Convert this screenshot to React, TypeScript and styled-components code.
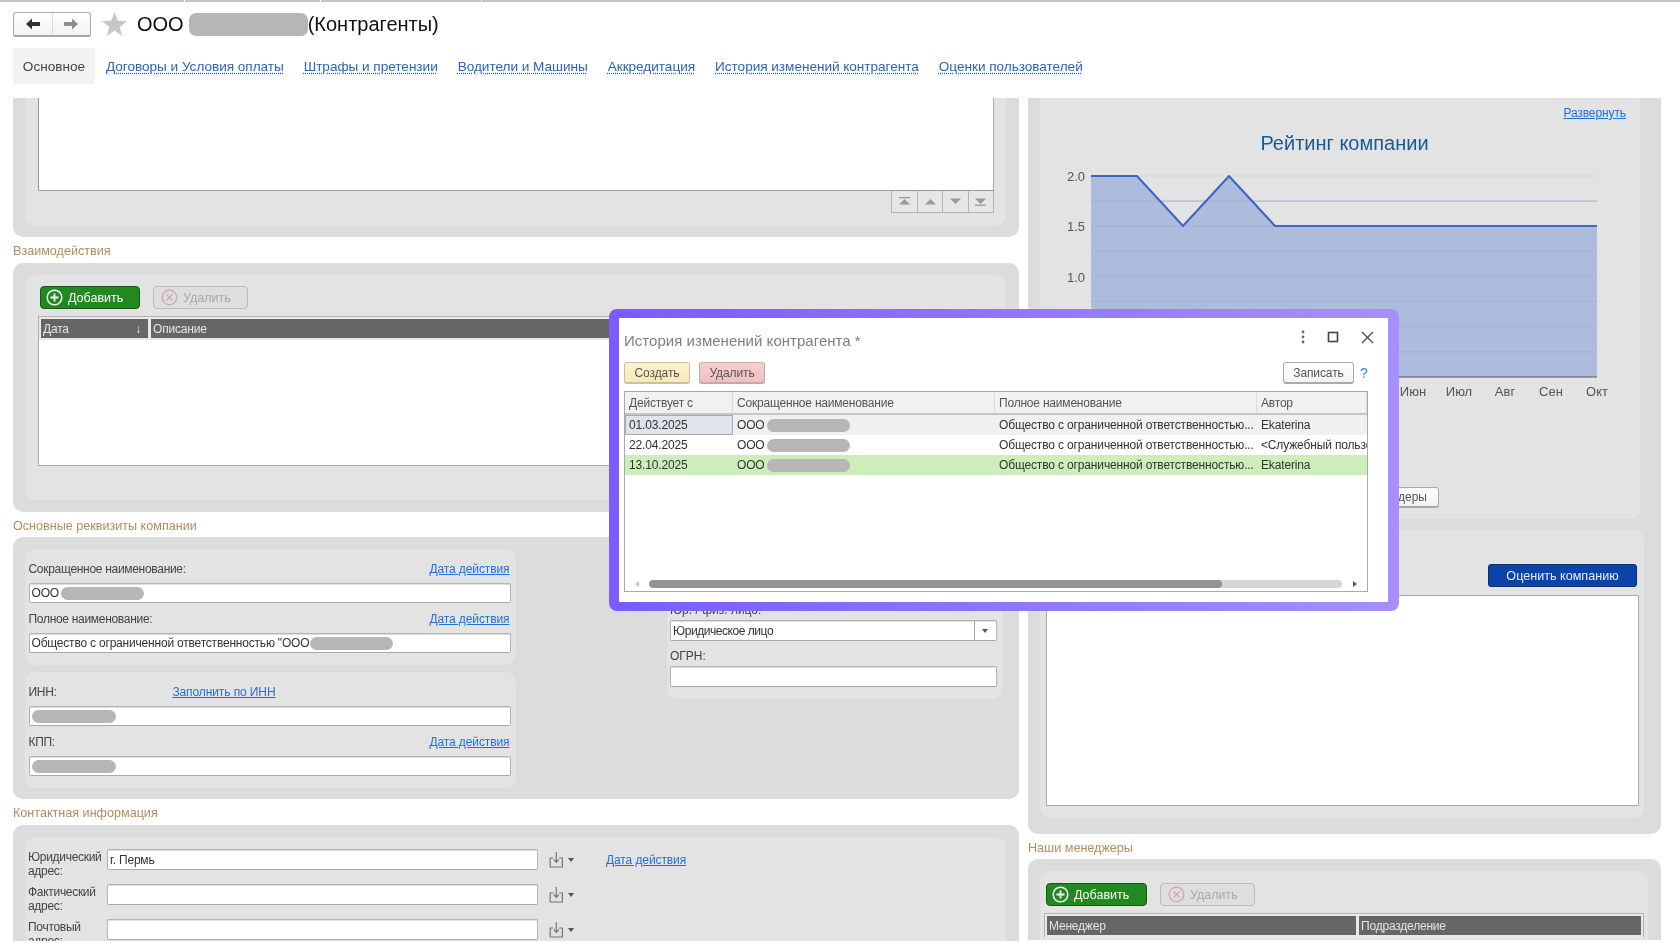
import React from "react";
import styled, { createGlobalStyle } from "styled-components";

const Global = createGlobalStyle`
  html, body { margin: 0; padding: 0; background: #fff; }
  body { font-family: "Liberation Sans", Arial, sans-serif; color: #333; font-size: 12px; }
  * { box-sizing: border-box; }
`;

const Page = styled.div`
  width: 1680px; height: 943px; overflow: hidden; position: relative; background: #fff;
  filter: blur(0.45px);
`;
const TopStrip = styled.div`display: flex; height: 2px; background: #c4c4c4;`;
const StripGap = styled.div<{ $w: number }>`width: ${p => p.$w}px; border-right: 1px solid #fff;`;

const Header = styled.div`display: flex; align-items: center; height: 34px; margin-top: 5px; padding-left: 13px;`;
const NavGroup = styled.div`
  display: flex; width: 78px; height: 25px; border: 1px solid #a8a8a8; border-bottom-width: 2px; border-radius: 3px; background: linear-gradient(#fff, #f2f2f2);
`;
const NavButton = styled.div<{ $dim?: boolean }>`
  flex: 1; display: flex; align-items: center; justify-content: center;
  color: ${p => (p.$dim ? "#8a8a8a" : "#333")};
  & + & { border-left: 1px solid #dcdcdc; }
`;
const StarBox = styled.div`width: 25px; height: 24px; margin-left: 11px; display: flex;`;
const Title = styled.h1`
  margin: 0 0 0 10px; display: flex; align-items: center; font-weight: 400; font-size: 20px; color: #111;
`;
const Pill = styled.span<{ $w: number; $h?: number; $ml?: number }>`
  display: inline-block; flex: none; width: ${p => p.$w}px; height: ${p => p.$h ?? 13}px; margin-left: ${p => p.$ml ?? 0}px;
  background: #b6b6b6; border-radius: 7px; vertical-align: middle;
`;
const Tabs = styled.nav`display: flex; align-items: center; height: 36px; margin-top: 7px; padding-left: 13px; gap: 20px;`;
const ActiveTab = styled.div`
  width: 82px; height: 36px; margin-right: -9px; display: flex; align-items: center; justify-content: center;
  background: #f2f2f2; border-radius: 3px; font-size: 13.6px; color: #444;
`;
const TabLink = styled.a`
  font-size: 13.6px; letter-spacing: -0.03px; color: #2f62b5; text-decoration: underline; text-decoration-style: dotted; text-underline-offset: 2px; white-space: nowrap;
`;

const Main = styled.main`display: flex; gap: 9px; height: 843px; margin-top: 14px; padding-left: 13px; overflow: hidden;`;
const LeftCol = styled.div`width: 1006px; flex: none;`;
const RightCol = styled.div`width: 633px; flex: none;`;

const Outer = styled.section<{ $flatTop?: boolean }>`
  background: #dcdcdc; border-radius: ${p => (p.$flatTop ? "0 0 10px 10px" : "10px")};
`;
const Inner = styled.div`background: #e3e3e3; border-radius: 10px;`;
const SectionLabel = styled.div<{ $h: number; $pt?: number }>`
  height: ${p => p.$h}px; padding-top: ${p => p.$pt ?? 0}px; display: flex; align-items: center; color: #b08d5f; font-size: 12.6px;
`;

const TopPanel = styled(Outer)`padding: 0 13px 11px 12px;`;
const TopInner = styled(Inner)`height: 128px; padding: 0 12px 0 13px; border-radius: 0 0 10px 10px;`;
const TextBox = styled.div`height: 93px; background: #fff; border-left: 1px solid #999; border-bottom: 1px solid #999; border-right: 1px solid #aaa;`;
const Pager = styled.div`display: flex; justify-content: flex-end;`;
const PagerBtn = styled.div`
  width: 26.4px; height: 22px; border: 1px solid #b4b4b4; border-top: 0; margin-left: -1px; display: flex; align-items: center; justify-content: center; background: #e6e6e6;
`;

const WorkPanel = styled(Outer)`padding: 12px 13px 12px 12px;`;
const WorkInner = styled(Inner)`height: 225px; padding: 11px 0 0 13px; overflow: hidden;`;
const ToolRow = styled.div`display: flex; align-items: center; gap: 13px; height: 23px; margin-left: 2px; font-size: 12.5px;`;
const AddBtn = styled.div<{ $w: number }>`
  width: ${p => p.$w}px; height: 23px; display: flex; align-items: center; gap: 5px; padding-left: 5px;
  background: #21891f; border: 1px solid #115c12; border-radius: 4px; color: #fff;
`;
const DelBtn = styled.div<{ $w: number }>`
  width: ${p => p.$w}px; height: 23px; display: flex; align-items: center; gap: 5px; padding-left: 7px;
  background: #dedede; border: 1px solid #c9b6b6; border-radius: 4px; color: #a9a9a9;
`;
const GridHead = styled.div`
  display: flex; gap: 3px; height: 24px; margin-top: 7px; padding: 2px 2px; border: 1px solid #b0b0b0; border-bottom: 0; background: #e9e9e9;
`;
const GridCell = styled.div<{ $w?: number }>`
  ${p => (p.$w ? `width: ${p.$w}px; flex: none;` : "flex: 1;")}
  background: #666; color: #e4e4e4; font-size: 12px; letter-spacing: -0.2px; display: flex; align-items: center; justify-content: space-between; padding: 0 7px 0 2px;
`;
const GridBody = styled.div`height: 126px; background: #fff; border: 1px solid #aaa; border-top: 0;`;

const ReqPanel = styled(Outer)`height: 262px; padding: 12px 4px 0 11.5px; display: flex;`;
const ReqLeft = styled.div`width: 491px; flex: none; display: flex; flex-direction: column; gap: 7px;`;
const FieldGroup = styled(Inner)`height: 116px; padding: 9px 5px 0 4px; display: flex; flex-direction: column; gap: 5px;`;
const FieldHead = styled.div`
  height: 20px; flex: none; display: flex; align-items: center; justify-content: space-between; font-size: 12px; letter-spacing: -0.3px; color: #444; padding-right: 1px; padding-top: 1px;
`;
const LinkText = styled.a`font-size: 12px; letter-spacing: -0.1px; color: #1f70dc; text-decoration: underline; white-space: nowrap;`;
const FillLink = styled(LinkText)`margin-right: 234px;`;
const RowLink = styled(LinkText)`margin-top: 4px;`;
const Input = styled.div<{ $h?: number }>`
  height: ${p => p.$h ?? 20}px; flex: none; display: flex; align-items: center; background: #fff; border: 1px solid #b4b4b4; border-bottom-color: #aaa; border-radius: 2px;
  padding-left: 2px; font-size: 12px; letter-spacing: -0.2px; color: #333; white-space: nowrap; box-shadow: inset 0 1px 0 #ddd;
`;
const ReqRight = styled(Inner)`
  width: 335px; height: 150px; margin-left: 151px; padding: 51px 5px 0 3.5px; flex: none; display: flex; flex-direction: column;
`;
const SmallLabel = styled.div<{ $mt?: number }>`height: 20px; margin-top: ${p => p.$mt ?? 0}px; display: flex; align-items: center; font-size: 12px; color: #444; flex: none;`;
const Combo = styled(Input)`height: 21px; justify-content: space-between; padding-right: 0; letter-spacing: -0.45px;`;
const ComboArrow = styled.div`
  width: 22px; height: 100%; border-left: 1px solid #aaa; display: flex; align-items: center; justify-content: center;
`;
const Tri = styled.span`width: 0; height: 0; border-left: 3px solid transparent; border-right: 3px solid transparent; border-top: 4px solid #555; display: inline-block;`;

const ContactPanel = styled(Outer)`padding: 12px 13px 0 12px; border-radius: 10px 10px 0 0;`;
const ContactInner = styled(Inner)`height: 120px; padding: 12px 0 0 3px; border-radius: 10px 10px 0 0; display: flex; flex-direction: column; gap: 14px;`;
const ContactRow = styled.div`display: flex; align-items: flex-start; height: 21px;`;
const ContactLabel = styled.div`width: 79px; flex: none; padding-top: 1px; line-height: 14px; font-size: 12px; letter-spacing: -0.3px; color: #444;`;
const ContactInput = styled(Input)`width: 431px; height: 21px;`;
const IconSlot = styled.div`width: 68px; flex: none; display: flex; align-items: center; gap: 4px; height: 21px; padding-left: 11px;`;

const ChartPanel = styled(Outer)`height: 736px; padding: 0 17px 16px 12px;`;
const ChartInner = styled(Inner)`height: 421px; width: 600px; padding-top: 6px; border-radius: 0 0 10px 10px;`;
const ExpandRow = styled.div`display: flex; justify-content: flex-end; height: 18px; align-items: center; padding-right: 14px;`;
const ChartTitle = styled.h2`
  margin: 8px 0 0; height: 26px; line-height: 26px; text-align: center; font-size: 20px; font-weight: 400; color: #175a9a; padding-left: 9px;
`;
const ChartSvg = styled.svg`display: block; width: 600px; height: 240px; margin-top: 4px; overflow: visible;`;
const LeadersBtn = styled.div`
  width: 100px; height: 21px; margin: 87px 0 0 299px; display: flex; align-items: center; justify-content: flex-end; padding-right: 11px;
  border: 1px solid #aaa; border-bottom-width: 2px; border-radius: 3px; background: linear-gradient(#fff, #f1f1f1); font-size: 12px; color: #555;
`;
const RatePanel = styled(Inner)`height: 288px; margin-top: 11px; padding: 34px 5px 0 6px; display: flex; flex-direction: column;`;
const RateBtn = styled.div`
  width: 149px; height: 23px; margin-left: 442px; display: flex; align-items: center; justify-content: center;
  background: #0b44a8; border: 1px solid #0a2f76; border-radius: 3px; color: #e6eeff; font-size: 12.6px;
`;
const RateBox = styled.div`height: 211px; margin-top: 8px; background: #fff; border: 1px solid #aaa;`;

const MgrPanel = styled(Outer)`padding: 12px 13px 0 12px; border-radius: 10px 10px 0 0;`;
const MgrInner = styled(Inner)`height: 69px; padding: 12px 4px 0 6px; border-radius: 10px 10px 0 0;`;
const MgrTools = styled(ToolRow)`margin-left: 0;`;
const MgrHead = styled(GridHead)`margin-top: 7px; margin-left: -2px; padding: 2px;`;

const Modal = styled.div`
  position: absolute; left: 609px; top: 309px; width: 790px; height: 302px; padding: 9px 11px 9px 10px; border-radius: 8px;
  background: linear-gradient(90deg, #7a5cff, #a78fff);
`;
const ModalBody = styled.div`width: 100%; height: 100%; background: #fff; padding: 0 20px 0 5px; display: flex; flex-direction: column;`;
const ModalHead = styled.div`height: 44px; flex: none; display: flex; align-items: center; justify-content: space-between;`;
const ModalTitle = styled.div`font-size: 15px; color: #7f7f7f; margin-top: 0; letter-spacing: 0.03px;`;
const ModalIcons = styled.div`display: flex; align-items: center; gap: 22px; margin-right: -6px; margin-top: -6px;`;
const ModalTools = styled.div`display: flex; align-items: center; height: 22px; gap: 9px;`;
const ToolBtn = styled.div<{ $bg: string; $w: number; $b: string }>`
  width: ${p => p.$w}px; height: 22px; display: flex; align-items: center; justify-content: center;
  background: ${p => p.$bg}; border: 1px solid ${p => p.$b}; border-bottom-width: 2px; border-radius: 3px; font-size: 12px; letter-spacing: -0.1px; color: #555;
`;
const Spacer = styled.div`flex: 1;`;
const Help = styled.span`font-size: 14px; color: #2b8ad0; margin-left: -3px; width: 8px;`;
const HistTable = styled.div`
  height: 201px; margin-top: 7px; flex: none; border: 1px solid #a9a9a9; position: relative; overflow: hidden; background: #fff;
`;
const Row = styled.div<{ $bg?: string; $h?: number }>`
  display: grid; grid-template-columns: 108px 262px 262px 110px; height: ${p => p.$h ?? 20}px; background: ${p => p.$bg ?? "#fff"}; align-items: stretch;
`;
const HeadRow = styled(Row)`border-bottom: 2px solid #c6c6c6;`;
const Th = styled.div`
  display: flex; align-items: center; padding-left: 4px; font-size: 12px; letter-spacing: -0.2px; color: #555; background: #f1f1f1; border-right: 1px solid #dcdcdc; white-space: nowrap; overflow: hidden;
`;
const Td = styled.div<{ $sel?: boolean }>`
  display: flex; align-items: center; padding-left: 4px; font-size: 12px; letter-spacing: -0.15px; color: #333; white-space: nowrap; overflow: hidden;
  ${p => (p.$sel ? "background: #dfe3ea; border: 1px solid #a2abb8; padding-left: 3px;" : "")}
`;
const ScrollArea = styled.div`position: absolute; left: 0; right: 0; bottom: 2px; height: 10px; display: flex; align-items: center;`;
const ScrollTrack = styled.div`position: relative; width: 693px; height: 8px; margin-left: 24px; background: #d6d6d6; border-radius: 4px; overflow: hidden;`;
const ScrollThumb = styled.div`width: 573px; height: 100%; background: #939393; border-radius: 4px;`;
const ScrollTriL = styled.span`position: absolute; left: 10px; width: 0; height: 0; border-top: 3px solid transparent; border-bottom: 3px solid transparent; border-right: 4px solid #c4c4c4;`;
const ScrollTriR = styled.span`position: absolute; right: 10px; width: 0; height: 0; border-top: 3px solid transparent; border-bottom: 3px solid transparent; border-left: 4px solid #555;`;

const PlusIcon = () => (
  <svg width="17" height="17" viewBox="0 0 17 17" fill="none" stroke="#fff" strokeWidth="1.5">
    <circle cx="8.5" cy="8.5" r="7.3" />
    <path d="M8.5 4.5v8M4.5 8.5h8" strokeWidth="1.8" />
  </svg>
);
const CrossIcon = () => (
  <svg width="17" height="17" viewBox="0 0 17 17" fill="none" stroke="#d2a9a9" strokeWidth="1.3">
    <circle cx="8.5" cy="8.5" r="7.3" />
    <path d="M5.5 5.5l6 6M11.5 5.5l-6 6" />
  </svg>
);
const AddressIcon = () => (
  <svg width="15" height="17" viewBox="0 0 15 17" fill="none" stroke="#777" strokeWidth="1.2">
    <path d="M4.5 7H1.2v9h12.2V7h-3.3" />
    <path d="M7.3 1v10M4.8 8.5l2.5 2.8 2.5-2.8" />
  </svg>
);
const PagerIcon = ({ up, bar }: { up: boolean; bar: boolean }) => (
  <svg width="13" height="9" viewBox="0 0 13 9" fill="#9a9a9a">
    {up ? <path d="M6.5 2L12 7.5H1z" /> : <path d="M1 1.5h11L6.5 7z" />}
    {bar && (up ? <rect x="1" y="0" width="11" height="1.3" /> : <rect x="1" y="7.6" width="11" height="1.3" />)}
  </svg>
);

const values = [16, 16, 66, 16, 66, 66, 66, 66, 66, 66, 66, 66];
const xs = values.map((_, i) => 51 + i * 46);
const line = xs.map((x, i) => `${x},${values[i]}`).join(" ");
const visibleMonths = [["Июн", 7], ["Июл", 8], ["Авг", 9], ["Сен", 10], ["Окт", 11]] as const;
const yLabels = [["2.0", 16], ["1.5", 66], ["1.0", 117]] as const;

const Chart = () => (
  <ChartSvg viewBox="0 0 600 240">
    {[0, 1, 2, 3, 4, 5, 6, 7].map(i => (
      <line key={i} x1="51" x2="557" y1={16 + i * 25.1} y2={16 + i * 25.1} stroke="#d8d8d8" strokeWidth="1.2" />
    ))}
    <polygon points={`51,217 ${line} 557,217`} fill="#adbcdc" />
    {[1, 2, 3, 4, 5, 6, 7].map(i => (
      <line key={i} x1="51" x2="557" y1={16 + i * 25.1} y2={16 + i * 25.1} stroke="#a3b3d5" strokeWidth="1" />
    ))}
    <polyline points={line} fill="none" stroke="#3b65c6" strokeWidth="2.2" />
    <line x1="51" x2="557" y1="217" y2="217" stroke="#555" strokeWidth="1.2" />
    {yLabels.map(([t, y]) => (
      <text key={t} x="45" y={y + 4.5} textAnchor="end" fontSize="13" fill="#555" fontFamily="Liberation Sans">{t}</text>
    ))}
    {visibleMonths.map(([m, i]) => (
      <text key={m} x={xs[i]} y="236" textAnchor="middle" fontSize="13" fill="#555" fontFamily="Liberation Sans">{m}</text>
    ))}
  </ChartSvg>
);

const rows = [
  { d: "01.03.2025", a: "Ekaterina", bg: "#eff0f2", sel: true },
  { d: "22.04.2025", a: "<Служебный пользователь>", bg: "#fff", sel: false },
  { d: "13.10.2025", a: "Ekaterina", bg: "#cdeebb", sel: false },
];

export default function App() {
  return (
    <Page>
      <Global />
      <TopStrip>
        <StripGap $w={185} /><StripGap $w={136} /><StripGap $w={161} />
      </TopStrip>
      <Header>
        <NavGroup>
          <NavButton>
            <svg width="16" height="12" viewBox="0 0 16 12"><path d="M7 0.5L1 6l6 5.5V8h8V4H7z" fill="#333" /></svg>
          </NavButton>
          <NavButton $dim>
            <svg width="16" height="12" viewBox="0 0 16 12"><path d="M9 0.5L15 6l-6 5.5V8H1V4h8z" fill="#8e8e8e" /></svg>
          </NavButton>
        </NavGroup>
        <StarBox>
          <svg width="25" height="24" viewBox="0 0 25 24"><path d="M12.5 0l3.2 8.8 9.3.3-7.3 5.8 2.6 9-7.8-5.3-7.8 5.3 2.6-9L0 9.1l9.3-.3z" fill="#c6c6c6" /></svg>
        </StarBox>
        <Title>ООО<Pill $w={119} $h={23} $ml={5} />(Контрагенты)</Title>
      </Header>
      <Tabs>
        <ActiveTab>Основное</ActiveTab>
        <TabLink>Договоры и Условия оплаты</TabLink>
        <TabLink>Штрафы и претензии</TabLink>
        <TabLink>Водители и Машины</TabLink>
        <TabLink>Аккредитация</TabLink>
        <TabLink>История изменений контрагента</TabLink>
        <TabLink>Оценки пользователей</TabLink>
      </Tabs>
      <Main>
        <LeftCol>
          <TopPanel $flatTop>
            <TopInner>
              <TextBox />
              <Pager>
                <PagerBtn><PagerIcon up bar /></PagerBtn>
                <PagerBtn><PagerIcon up bar={false} /></PagerBtn>
                <PagerBtn><PagerIcon up={false} bar={false} /></PagerBtn>
                <PagerBtn><PagerIcon up={false} bar /></PagerBtn>
              </Pager>
            </TopInner>
          </TopPanel>
          <SectionLabel $h={26} $pt={2}>Взаимодействия</SectionLabel>
          <WorkPanel>
            <WorkInner>
              <ToolRow>
                <AddBtn $w={100}><PlusIcon />Добавить</AddBtn>
                <DelBtn $w={95}><CrossIcon />Удалить</DelBtn>
              </ToolRow>
              <GridHead>
                <GridCell $w={107}>Дата<span>↓</span></GridCell>
                <GridCell>Описание</GridCell>
              </GridHead>
              <GridBody />
            </WorkInner>
          </WorkPanel>
          <SectionLabel $h={25} $pt={2}>Основные реквизиты компании</SectionLabel>
          <ReqPanel>
            <ReqLeft>
              <FieldGroup>
                <FieldHead>Сокращенное наименование:<LinkText>Дата действия</LinkText></FieldHead>
                <Input>ООО<Pill $w={83} $ml={2} /></Input>
                <FieldHead>Полное наименование:<LinkText>Дата действия</LinkText></FieldHead>
                <Input>Общество с ограниченной ответственностью "ООО<Pill $w={83} $ml={1} /></Input>
              </FieldGroup>
              <FieldGroup>
                <FieldHead>ИНН:<FillLink>Заполнить по ИНН</FillLink></FieldHead>
                <Input><Pill $w={84} /></Input>
                <FieldHead>КПП:<LinkText>Дата действия</LinkText></FieldHead>
                <Input><Pill $w={84} /></Input>
              </FieldGroup>
            </ReqLeft>
            <ReqRight>
              <SmallLabel>Юр. / физ. лицо:</SmallLabel>
              <Combo>Юридическое лицо<ComboArrow><Tri /></ComboArrow></Combo>
              <SmallLabel $mt={5}>ОГРН:</SmallLabel>
              <Input $h={21} />
            </ReqRight>
          </ReqPanel>
          <SectionLabel $h={26} $pt={2}>Контактная информация</SectionLabel>
          <ContactPanel>
            <ContactInner>
              <ContactRow>
                <ContactLabel>Юридический адрес:</ContactLabel>
                <ContactInput>г. Пермь</ContactInput>
                <IconSlot><AddressIcon /><Tri /></IconSlot>
                <RowLink>Дата действия</RowLink>
              </ContactRow>
              <ContactRow>
                <ContactLabel>Фактический адрес:</ContactLabel>
                <ContactInput />
                <IconSlot><AddressIcon /><Tri /></IconSlot>
              </ContactRow>
              <ContactRow>
                <ContactLabel>Почтовый адрес:</ContactLabel>
                <ContactInput />
                <IconSlot><AddressIcon /><Tri /></IconSlot>
              </ContactRow>
            </ContactInner>
          </ContactPanel>
        </LeftCol>
        <RightCol>
          <ChartPanel $flatTop>
            <ChartInner>
              <ExpandRow><LinkText>Развернуть</LinkText></ExpandRow>
              <ChartTitle>Рейтинг компании</ChartTitle>
              <Chart />
              <LeadersBtn>Лидеры</LeadersBtn>
            </ChartInner>
            <RatePanel>
              <RateBtn>Оценить компанию</RateBtn>
              <RateBox />
            </RatePanel>
          </ChartPanel>
          <SectionLabel $h={25} $pt={2}>Наши менеджеры</SectionLabel>
          <MgrPanel>
            <MgrInner>
              <MgrTools>
                <AddBtn $w={101}><PlusIcon />Добавить</AddBtn>
                <DelBtn $w={95}><CrossIcon />Удалить</DelBtn>
              </MgrTools>
              <MgrHead>
                <GridCell $w={309}>Менеджер</GridCell>
                <GridCell>Подразделение</GridCell>
              </MgrHead>
            </MgrInner>
          </MgrPanel>
        </RightCol>
      </Main>
      <Modal>
        <ModalBody>
          <ModalHead>
            <ModalTitle>История изменений контрагента *</ModalTitle>
            <ModalIcons>
              <svg width="4" height="14" viewBox="0 0 4 14" fill="#666"><circle cx="2" cy="2" r="1.4" /><circle cx="2" cy="7" r="1.4" /><circle cx="2" cy="12" r="1.4" /></svg>
              <svg width="12" height="12" viewBox="0 0 12 12" fill="none" stroke="#444" strokeWidth="1.6"><rect x="1.5" y="1.5" width="9" height="9" /></svg>
              <svg width="13" height="13" viewBox="0 0 13 13" fill="none" stroke="#444" strokeWidth="1.2"><path d="M1 1l11 11M12 1L1 12" /></svg>
            </ModalIcons>
          </ModalHead>
          <ModalTools>
            <ToolBtn $w={66} $bg="linear-gradient(#fdf3cf,#f5e8b8)" $b="#c9c0a2">Создать</ToolBtn>
            <ToolBtn $w={66} $bg="linear-gradient(#f7cfd0,#efc0c2)" $b="#c4a9aa">Удалить</ToolBtn>
            <Spacer />
            <ToolBtn $w={71} $bg="linear-gradient(#fff,#f3f3f3)" $b="#aaa">Записать</ToolBtn>
            <Help>?</Help>
          </ModalTools>
          <HistTable>
            <HeadRow $h={23}>
              <Th>Действует с</Th>
              <Th>Сокращенное наименование</Th>
              <Th>Полное наименование</Th>
              <Th>Автор</Th>
            </HeadRow>
            {rows.map(r => (
              <Row key={r.d} $bg={r.bg}>
                <Td $sel={r.sel}>{r.d}</Td>
                <Td>ООО<Pill $w={83} $ml={2} /></Td>
                <Td>Общество с ограниченной ответственностью...</Td>
                <Td>{r.a}</Td>
              </Row>
            ))}
            <ScrollArea>
              <ScrollTriL />
              <ScrollTrack><ScrollThumb /></ScrollTrack>
              <ScrollTriR />
            </ScrollArea>
          </HistTable>
        </ModalBody>
      </Modal>
    </Page>
  );
}
